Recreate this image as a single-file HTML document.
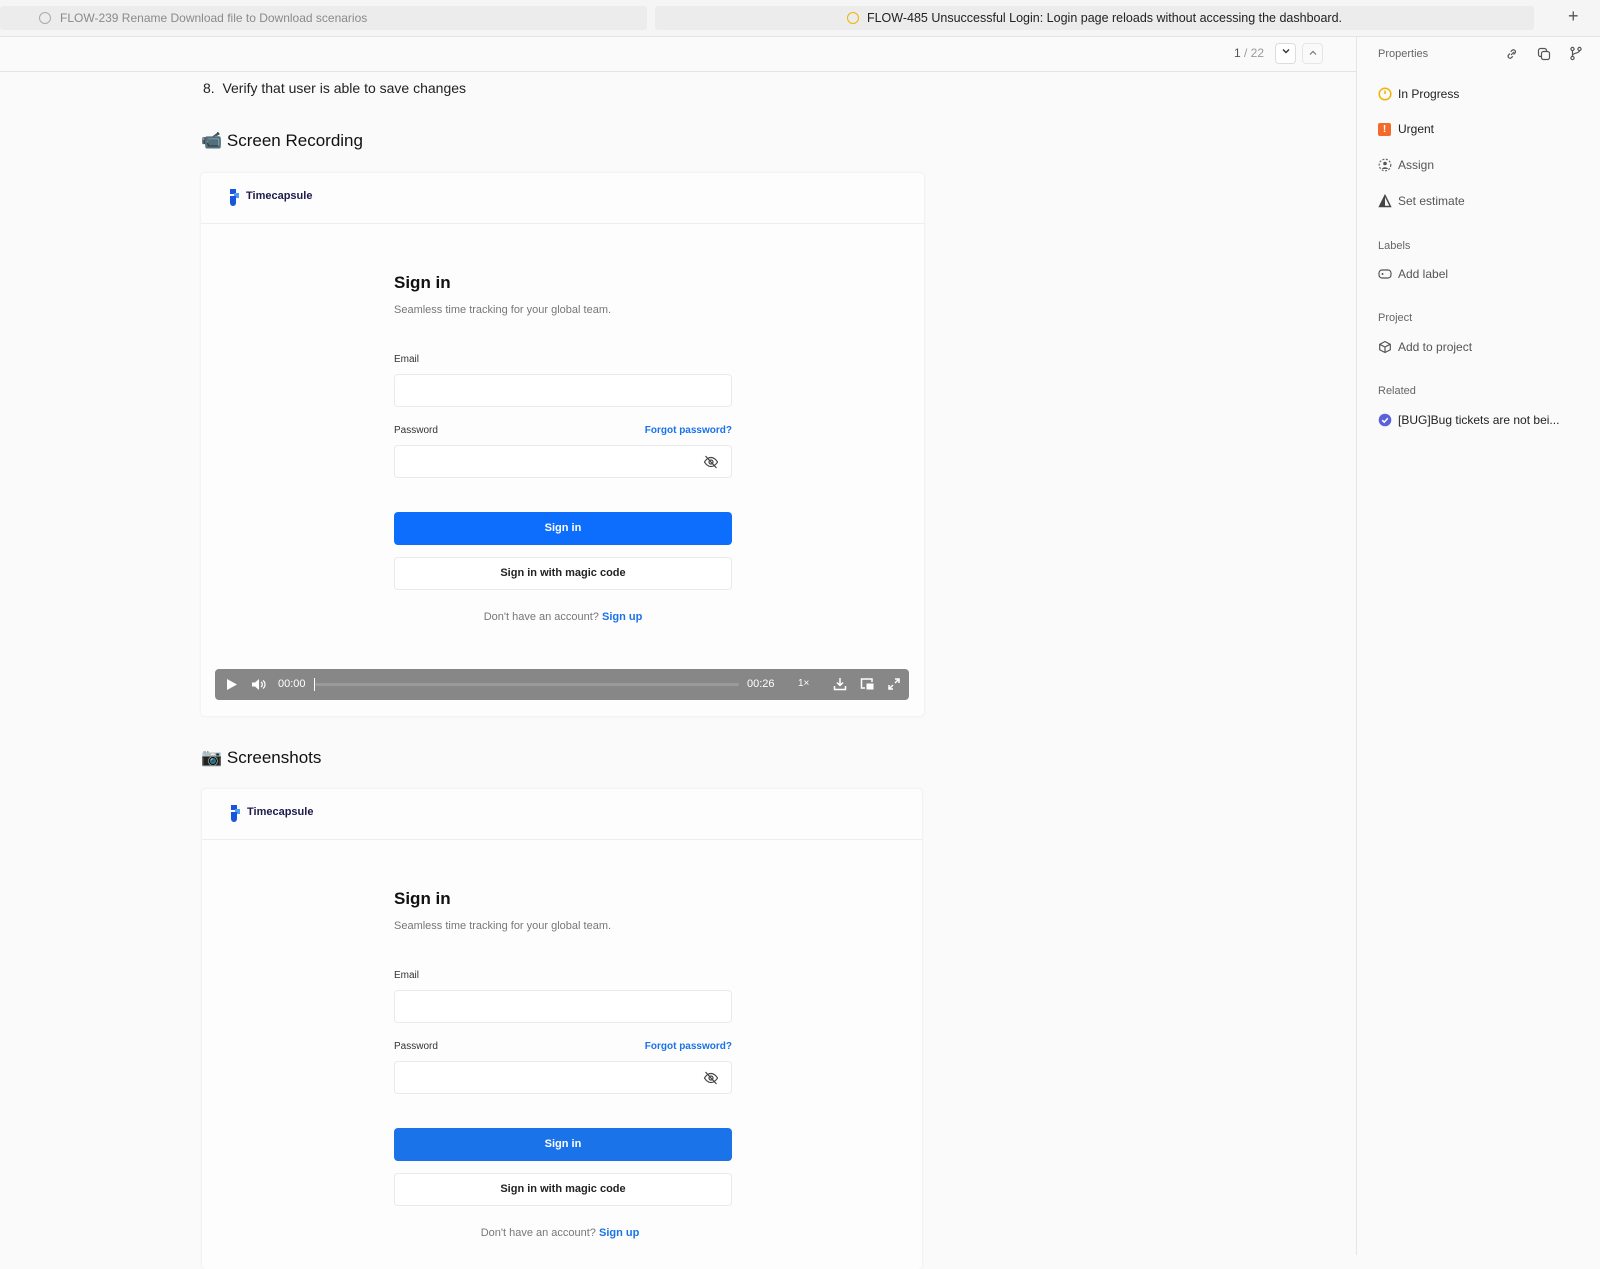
<!DOCTYPE html>
<html><head><meta charset="utf-8"><style>
*{box-sizing:border-box;margin:0;padding:0}
body{width:1600px;height:1255px;overflow:hidden;background:#fafafa;font-family:"Liberation Sans",sans-serif;position:relative;color:#222}
.a{position:absolute}
.tab{position:absolute;top:6px;height:24px;background:#ececec;border-radius:3px;font-size:12px;line-height:24px}
.card{position:absolute;background:#fdfdfd;border-radius:4px;box-shadow:0 0 3px rgba(0,0,0,.08)}
.card .hl{position:absolute;left:0;right:0;top:50px;border-top:1px solid #eee}
.inp{position:absolute;left:193px;width:338px;height:33px;border:1px solid #eaeaea;border-radius:4px;background:#fff}
.lbl{position:absolute;left:193px;font-size:10px;color:#333}
.prop{position:absolute;left:1398px;font-size:12px;color:#333}
.sec{position:absolute;left:1378px;font-size:11px;color:#666}
.ic{position:absolute;left:1378px}
</style></head><body>
<div class="a" style="left:0;top:0;width:1600px;height:37px;background:#f5f5f5;border-bottom:1px solid #e3e3e3"></div>
<div class="tab" style="left:0;width:647px;color:#8a8a8a"><span style="display:inline-block;width:12px;height:12px;border:1px solid #aaa;border-radius:50%;margin:0 9px 0 39px;vertical-align:-2px"></span>FLOW-239 Rename Download file to Download scenarios</div>
<div class="tab" style="left:655px;width:879px;text-align:center;color:#222;font-size:12.5px"><span style="display:inline-block;width:12px;height:12px;border:1.5px solid #f0b400;border-radius:50%;margin-right:8px;vertical-align:-2px"></span>FLOW-485 Unsuccessful Login: Login page reloads without accessing the dashboard.</div>
<div class="a" style="left:1568px;top:6px;font-size:18px;color:#555">+</div>

<div class="a" style="left:0;top:71px;width:1357px;border-top:1px solid #e3e3e3"></div>
<div class="a" style="left:1356px;top:37px;width:1px;height:1218px;background:#e6e6e6"></div>
<div class="a" style="left:1234px;top:46px;font-size:12px;color:#555">1 <span style="color:#999">/ 22</span></div>
<div class="a" style="left:1275px;top:43px;width:21px;height:21px;border:1px solid #ddd;border-radius:4px;background:#fff;font-size:10px;text-align:center;line-height:19px;color:#333"><svg width="10" height="10" viewBox="0 0 10 10"><path d="M2 3.5L5 6.5 8 3.5" fill="none" stroke="#333" stroke-width="1.4"/></svg></div>
<div class="a" style="left:1302px;top:43px;width:21px;height:21px;border:1px solid #e6e6e6;border-radius:4px;background:#fafafa;text-align:center;line-height:19px"><svg width="10" height="10" viewBox="0 0 10 10"><path d="M2 6.5L5 3.5 8 6.5" fill="none" stroke="#777" stroke-width="1.2"/></svg></div>

<div class="a" style="left:1378px;top:48px;font-size:11px;color:#666">Properties</div>
<svg class="a" style="left:1505px;top:47px" width="14" height="14" viewBox="0 0 14 14"><path d="M6 8l3-3M5 6.5L3.5 8a2 2 0 0 0 2.8 2.8L7.8 9.3M8.5 7.5L10 6a2 2 0 0 0-2.8-2.8L5.7 4.7" fill="none" stroke="#555" stroke-width="1.2"/></svg>
<svg class="a" style="left:1537px;top:47px" width="14" height="14" viewBox="0 0 14 14"><rect x="1.5" y="1.5" width="8" height="8" rx="2" fill="none" stroke="#555" stroke-width="1.2"/><rect x="4.5" y="4.5" width="8" height="8" rx="2" fill="#fafafa" stroke="#555" stroke-width="1.2"/></svg>
<svg class="a" style="left:1569px;top:46px" width="14" height="15" viewBox="0 0 14 15"><circle cx="3.5" cy="3" r="1.6" fill="none" stroke="#555" stroke-width="1.2"/><circle cx="3.5" cy="12" r="1.6" fill="none" stroke="#555" stroke-width="1.2"/><circle cx="10.5" cy="3" r="1.6" fill="none" stroke="#555" stroke-width="1.2"/><path d="M3.5 4.6v5.8M10.5 4.6c0 3-7 2-7 5" fill="none" stroke="#555" stroke-width="1.2"/></svg>

<svg class="ic" style="top:87px" width="14" height="14"><circle cx="7" cy="7" r="5.8" fill="none" stroke="#f0b400" stroke-width="1.5"/><path d="M7 3.5V7" stroke="#f0b400" stroke-width="1.5"/></svg>
<div class="prop" style="top:87px;color:#222">In Progress</div>
<div class="ic" style="top:123px;width:13px;height:13px;background:#f26b2a;border-radius:2px;color:#fff;font-size:10px;font-weight:bold;text-align:center;line-height:13px">!</div>
<div class="prop" style="top:122px;color:#222">Urgent</div>
<svg class="ic" style="top:158px" width="14" height="14"><circle cx="7" cy="7" r="5.8" fill="none" stroke="#666" stroke-width="1.2" stroke-dasharray="2 1.5"/><circle cx="7" cy="5.5" r="1.8" fill="#555"/><path d="M3.8 11a3.5 3 0 0 1 6.4 0z" fill="#555"/></svg>
<div class="prop" style="top:158px;color:#555">Assign</div>
<svg class="ic" style="top:194px" width="14" height="14"><path d="M7 1.5L12.5 12.5H1.5z" fill="none" stroke="#444" stroke-width="1.4"/><path d="M7 1.5L1.5 12.5H7z" fill="#444"/></svg>
<div class="prop" style="top:194px;color:#555">Set estimate</div>
<div class="sec" style="top:240px">Labels</div>
<svg class="ic" style="top:267px" width="14" height="14"><rect x="1" y="3" width="12" height="8" rx="3" fill="none" stroke="#555" stroke-width="1.2"/><circle cx="4.5" cy="7" r="1" fill="#555"/></svg>
<div class="prop" style="top:267px;color:#555">Add label</div>
<div class="sec" style="top:312px">Project</div>
<svg class="ic" style="top:340px" width="14" height="14"><path d="M7 1.5l5.3 2.8v5.5L7 12.5 1.7 9.8V4.3z M1.7 4.3L7 7l5.3-2.8M7 7v5.5" fill="none" stroke="#555" stroke-width="1.2"/></svg>
<div class="prop" style="top:340px;color:#555">Add to project</div>
<div class="sec" style="top:385px">Related</div>
<svg class="ic" style="top:413px" width="14" height="14"><circle cx="7" cy="7" r="6.3" fill="#5a62d9"/><path d="M4.2 7.2l2 2 3.6-4" fill="none" stroke="#fff" stroke-width="1.5"/></svg>
<div class="prop" style="top:413px;color:#222">[BUG]Bug tickets are not bei...</div>

<div class="a" style="left:203px;top:80px;font-size:14px;color:#222">8.&nbsp; Verify that user is able to save changes</div>
<div class="a" style="left:201px;top:131px;font-size:17px;color:#111">📹 Screen Recording</div>

<!-- card 1 -->
<div class="card" style="left:201px;top:173px;width:723px;height:543px">
 <div class="hl"></div>
 <div class="a" style="left:29px;top:16px;width:6px;height:5px;background:#1a56db"></div>
 <div class="a" style="left:33px;top:20px;width:5px;height:5px;background:#4a9cf5"></div>
 <div class="a" style="left:29px;top:23px;width:6px;height:10px;background:#1a56db;border-radius:0 0 4px 4px"></div>
 <div class="a" style="left:45px;top:17px;font-size:11px;font-weight:bold;color:#1e1b4b">Timecapsule</div>
 <div class="a" style="left:193px;top:100px;font-size:17px;font-weight:bold;color:#111">Sign in</div>
 <div class="a" style="left:193px;top:131px;font-size:11px;color:#777">Seamless time tracking for your global team.</div>
 <div class="lbl" style="top:181px">Email</div>
 <div class="inp" style="top:201px"></div>
 <div class="lbl" style="top:252px">Password</div>
 <div class="a" style="left:400px;width:131px;text-align:right;top:252px;font-size:10px;font-weight:bold;color:#1a73e8">Forgot password?</div>
 <div class="inp" style="top:272px"><svg class="a" style="left:308px;top:9px" width="16" height="14" viewBox="0 0 16 14"><path d="M1.5 7S4 2.5 8 2.5 14.5 7 14.5 7 12 11.5 8 11.5 1.5 7 1.5 7z" fill="none" stroke="#444" stroke-width="1.2"/><circle cx="8" cy="7" r="2" fill="none" stroke="#444" stroke-width="1.2"/><path d="M2.5 1L13.5 13" stroke="#444" stroke-width="1.2"/></svg></div>
 <div class="a" style="left:193px;top:339px;width:338px;height:33px;background:#0d6efd;border-radius:4px;color:#fff;font-size:11px;font-weight:bold;text-align:center;line-height:33px">Sign in</div>
 <div class="inp" style="top:384px;text-align:center;line-height:31px;font-size:11px;font-weight:bold;color:#222">Sign in with magic code</div>
 <div class="a" style="left:193px;width:338px;text-align:center;top:438px;font-size:11px;color:#777">Don't have an account? <b style="color:#1a73e8">Sign up</b></div>
 <div class="a" style="left:14px;top:496px;width:694px;height:31px;background:#878787;border-radius:4px;color:#fff;font-size:11px">
  <svg class="a" style="left:11px;top:9px" width="12" height="13"><path d="M1 1l10 5.5L1 12z" fill="#fff"/></svg>
  <svg class="a" style="left:36px;top:9px" width="16" height="13"><path d="M1 4.5h3l4-3.5v11l-4-3.5H1z" fill="#fff"/><path d="M10 4a3 3 0 0 1 0 5M12 2.5a5 5 0 0 1 0 8" fill="none" stroke="#fff" stroke-width="1.2"/></svg>
  <div class="a" style="left:63px;top:9px">00:00</div>
  <div class="a" style="left:99px;top:9px;width:1px;height:13px;background:#fff"></div>
  <div class="a" style="left:100px;top:14px;width:424px;height:3px;background:#9a9a9a;border-radius:2px"></div>
  <div class="a" style="left:532px;top:9px">00:26</div>
  <div class="a" style="left:583px;top:9px;font-size:10px">1×</div>
  <svg class="a" style="left:618px;top:8px" width="14" height="14"><path d="M7 1v7M4 5.5L7 8.5 10 5.5M1.5 9v3.5h11V9" fill="none" stroke="#fff" stroke-width="1.5"/></svg>
  <svg class="a" style="left:645px;top:8px" width="14" height="14"><path d="M12 5V2H1.5v9H5" fill="none" stroke="#fff" stroke-width="1.5"/><rect x="6.5" y="6.5" width="7" height="6" fill="#fff"/></svg>
  <svg class="a" style="left:672px;top:8px" width="14" height="14"><path d="M8 2h4v4M12 2L8 6M6 12H2V8M2 12l4-4" fill="none" stroke="#fff" stroke-width="1.5"/></svg>
 </div>
</div>

<div class="a" style="left:201px;top:748px;font-size:17px;color:#111">📷 Screenshots</div>

<!-- card 2 -->
<div class="card" style="left:202px;top:789px;width:720px;height:480px">
 <div class="hl"></div>
 <div class="a" style="left:29px;top:16px;width:6px;height:5px;background:#1a56db"></div>
 <div class="a" style="left:33px;top:20px;width:5px;height:5px;background:#4a9cf5"></div>
 <div class="a" style="left:29px;top:23px;width:6px;height:10px;background:#1a56db;border-radius:0 0 4px 4px"></div>
 <div class="a" style="left:45px;top:17px;font-size:11px;font-weight:bold;color:#1e1b4b">Timecapsule</div>
 <div class="a" style="left:192px;top:100px;font-size:17px;font-weight:bold;color:#111">Sign in</div>
 <div class="a" style="left:192px;top:131px;font-size:11px;color:#777">Seamless time tracking for your global team.</div>
 <div class="lbl" style="left:192px;top:181px">Email</div>
 <div class="inp" style="left:192px;top:201px"></div>
 <div class="lbl" style="left:192px;top:252px">Password</div>
 <div class="a" style="left:399px;width:131px;text-align:right;top:252px;font-size:10px;font-weight:bold;color:#1a73e8">Forgot password?</div>
 <div class="inp" style="left:192px;top:272px"><svg class="a" style="left:308px;top:9px" width="16" height="14" viewBox="0 0 16 14"><path d="M1.5 7S4 2.5 8 2.5 14.5 7 14.5 7 12 11.5 8 11.5 1.5 7 1.5 7z" fill="none" stroke="#444" stroke-width="1.2"/><circle cx="8" cy="7" r="2" fill="none" stroke="#444" stroke-width="1.2"/><path d="M2.5 1L13.5 13" stroke="#444" stroke-width="1.2"/></svg></div>
 <div class="a" style="left:192px;top:339px;width:338px;height:33px;background:#1a73e8;border-radius:4px;color:#fff;font-size:11px;font-weight:bold;text-align:center;line-height:33px">Sign in</div>
 <div class="inp" style="left:192px;top:384px;text-align:center;line-height:31px;font-size:11px;font-weight:bold;color:#222">Sign in with magic code</div>
 <div class="a" style="left:189px;width:338px;text-align:center;top:438px;font-size:11px;color:#777">Don't have an account? <b style="color:#1a73e8">Sign up</b></div>
</div>
</body></html>
